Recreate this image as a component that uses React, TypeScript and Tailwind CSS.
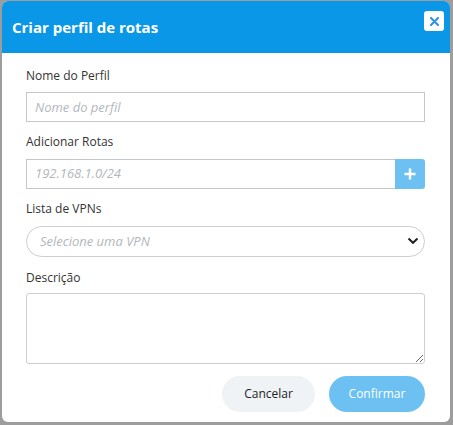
import { useState } from "react";

export default function App() {
  const [nome, setNome] = useState("");
  const [rota, setRota] = useState("");
  const [vpn, setVpn] = useState("");
  const [descricao, setDescricao] = useState("");

  return (
    <div
      className="w-full h-[425px] bg-[#9d9d9d] pt-[1px] pl-[2px]"
      style={{ fontFamily: '"Open Sans", "Noto Sans", sans-serif' }}
    >
      <div className="w-[448px] h-[421px] bg-white rounded-md overflow-hidden flex flex-col">
        <div className="h-[52px] bg-[#0b97e8] flex justify-between pl-[10px] pr-[6px]">
          <h2 className="text-white font-bold text-[15px] self-center">Criar perfil de rotas</h2>
          <button className="mt-[10px] w-[20px] h-[20px] bg-white rounded-[3px] flex items-center justify-center">
            <svg width="9" height="9" viewBox="0 0 9 9">
              <path d="M1 1 L8 8 M8 1 L1 8" stroke="#2b8fe3" strokeWidth="2" strokeLinecap="round" />
            </svg>
          </button>
        </div>

        <div className="flex-1 flex flex-col pl-[24px] pr-[25px] pt-[15px] text-[#333]">
          <label className="text-[12px] leading-[16px]">Nome do Perfil</label>
          <input
            value={nome}
            onChange={(e) => setNome(e.target.value)}
            placeholder="Nome do perfil"
            className="mt-[8px] h-[30px] border border-[#c3c6ca] px-[8px] text-[13px] outline-none placeholder:italic placeholder:text-[#b3b7bc]"
          />

          <label className="mt-[12px] text-[12px] leading-[16px]">Adicionar Rotas</label>
          <div className="mt-[9px] flex h-[30px]">
            <input
              value={rota}
              onChange={(e) => setRota(e.target.value)}
              placeholder="192.168.1.0/24"
              className="flex-1 min-w-0 border border-r-0 border-[#c3c6ca] px-[8px] text-[13px] outline-none placeholder:italic placeholder:text-[#b3b7bc]"
            />
            <button className="w-[30px] bg-[#6cc1f2] rounded-r-[3px] flex items-center justify-center">
              <svg width="12" height="12" viewBox="0 0 12 12">
                <path d="M6 0.5 V11.5 M0.5 6 H11.5" stroke="white" strokeWidth="2.4" />
              </svg>
            </button>
          </div>

          <label className="mt-[12px] text-[12px] leading-[16px]">Lista de VPNs</label>
          <div className="mt-[9px] relative h-[31px]">
            <select
              value={vpn}
              onChange={(e) => setVpn(e.target.value)}
              className="w-full h-full appearance-none rounded-full border border-[#ccced1] px-[13px] text-[13px] italic text-[#b3b7bc] bg-white outline-none"
            >
              <option value="">Selecione uma VPN</option>
            </select>
            <svg
              className="absolute right-[6px] top-[11px] pointer-events-none"
              width="12"
              height="8"
              viewBox="0 0 12 8"
            >
              <path d="M1.5 1.5 L6 5.8 L10.5 1.5" stroke="#222" strokeWidth="2" fill="none" />
            </svg>
          </div>

          <label className="mt-[13px] text-[12px] leading-[16px]">Descrição</label>
          <textarea
            value={descricao}
            onChange={(e) => setDescricao(e.target.value)}
            className="mt-[7px] h-[71px] border border-[#ccced1] rounded-[3px] px-[8px] py-[6px] text-[13px] outline-none"
          />

          <div className="mt-[12px] flex justify-end gap-[14px]">
            <button className="w-[93px] h-[36px] rounded-full bg-[#eff3f6] text-[#222] text-[12px]">
              Cancelar
            </button>
            <button className="w-[96px] h-[36px] rounded-full bg-[#6cc1f2] text-white text-[12px]">
              Confirmar
            </button>
          </div>
        </div>
      </div>
    </div>
  );
}
